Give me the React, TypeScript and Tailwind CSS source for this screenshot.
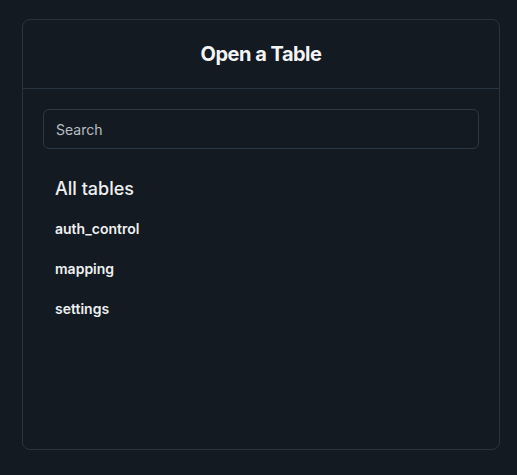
export default function App() {
  const tables = ["auth_control", "mapping", "settings"];
  return (
    <div
      className="min-h-[475px] w-full bg-[#131a21] pt-[19px] pl-[22px] pr-[18px]"
      style={{ fontFamily: "Inter, 'Noto Sans', sans-serif" }}
    >
      <div className="w-[478px] h-[431px] rounded-[8px] border border-[#283540] bg-[#131a21] flex flex-col">
        <div className="h-[69px] flex items-center justify-center border-b border-[#283540]">
          <h1 className="text-[20px] font-bold text-[#f3f4f6] tracking-[-0.5px] leading-6">Open a Table</h1>
        </div>
        <div className="px-5 pt-5">
          <div className="h-10 rounded-[6px] border border-[#2b3946] flex items-center pl-3">
            <span className="text-[14px] text-[#b9bec4]">Search</span>
          </div>
          <div className="px-3 pt-[28px]">
            <div className="text-[18px] font-medium text-[#eef0f2] leading-6 h-[24px]">All tables</div>
            <div className="flex flex-col mt-[7px]">
              {tables.map((t) => (
                <div key={t} className="h-10 flex items-center text-[14px] font-semibold text-[#eef0f2]">
                  {t}
                </div>
              ))}
            </div>
          </div>
        </div>
      </div>
    </div>
  );
}
